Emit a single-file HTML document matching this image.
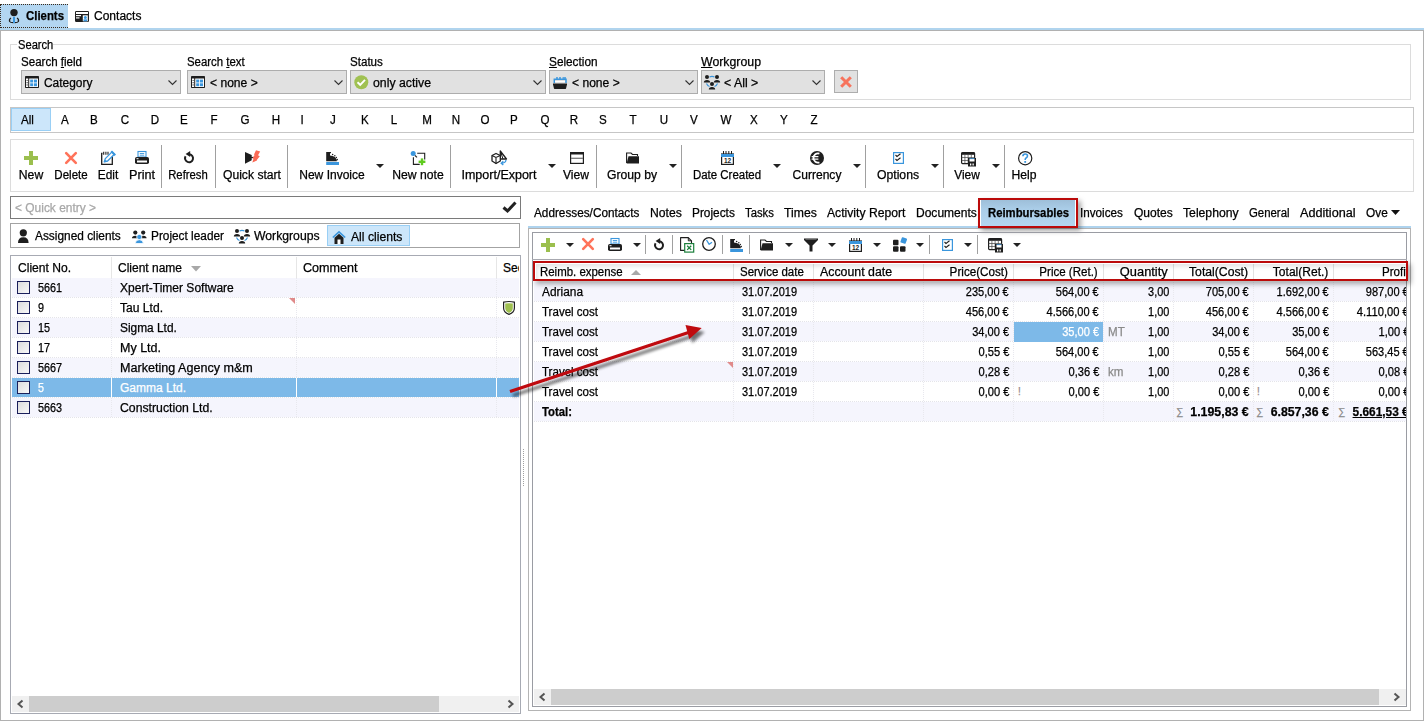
<!DOCTYPE html><html><head><meta charset="utf-8"><style>
html,body{margin:0;padding:0;background:#fff;width:1424px;height:721px;overflow:hidden;position:relative}
.a{position:absolute;box-sizing:border-box}
.t{position:absolute;font-family:"Liberation Sans",sans-serif;font-size:12px;line-height:16px;color:#000;white-space:nowrap;-webkit-text-stroke:0.25px currentColor}
svg.a{overflow:visible}
u{text-decoration:underline;text-underline-offset:1px}
</style></head><body>
<div class="a" style="left:0px;top:4px;width:68px;height:24px;background:#b3d6f1;"></div>
<div class="a" style="left:0;top:4px;width:68px;height:24px;border:1px dotted #3a2a1a;border-right:none"></div>
<div class="t" style="left:26px;top:8px;transform:scaleX(0.9500);transform-origin:0 0;"><b>Clients</b></div>
<div class="t" style="left:94px;top:8px;transform:scaleX(1.0012);transform-origin:0 0;">Contacts</div>
<div class="a" style="left:0px;top:28px;width:1424px;height:2px;background:#b0d4ee;"></div>
<div class="a" style="left:0px;top:30px;width:1424px;height:691px;border:1px solid #b1b1b1;"></div>
<div class="a" style="left:10px;top:44px;width:1401px;height:56px;border:1px solid #dcdcdc;"></div>
<div class="a" style="left:17px;top:38px;width:36px;height:12px;background:#fff"></div>
<div class="t" style="left:18px;top:37px;transform:scaleX(0.9286);transform-origin:0 0;">Search</div>
<div class="t" style="left:21px;top:54px;transform:scaleX(0.9628);transform-origin:0 0;">Search <u>f</u>ield</div>
<div class="t" style="left:187px;top:54px;transform:scaleX(0.9494);transform-origin:0 0;">Search <u>t</u>ext</div>
<div class="t" style="left:350px;top:54px;transform:scaleX(0.9650);transform-origin:0 0;">Status</div>
<div class="t" style="left:549px;top:54px;transform:scaleX(0.9826);transform-origin:0 0;"><u>S</u>election</div>
<div class="t" style="left:701px;top:54px;transform:scaleX(1.0262);transform-origin:0 0;"><u>W</u>orkgroup</div>
<div class="a" style="left:21px;top:70px;width:160px;height:24px;border:1px solid #adadad;background:#e1e1e1;"></div>
<div class="t" style="left:44px;top:75px;transform:scaleX(0.9941);transform-origin:0 0;">Category</div>
<svg class="a" style="left:168px;top:80px;" width="9" height="6" viewBox="0 0 9 6"><path d="M0.5 0.5 L4.5 4.5 L8.5 0.5" fill="none" stroke="#333" stroke-width="1.1"/></svg>
<div class="a" style="left:187px;top:70px;width:160px;height:24px;border:1px solid #adadad;background:#e1e1e1;"></div>
<div class="t" style="left:210px;top:75px;transform:scaleX(1.0069);transform-origin:0 0;">&lt; none &gt;</div>
<svg class="a" style="left:334px;top:80px;" width="9" height="6" viewBox="0 0 9 6"><path d="M0.5 0.5 L4.5 4.5 L8.5 0.5" fill="none" stroke="#333" stroke-width="1.1"/></svg>
<div class="a" style="left:350px;top:70px;width:196px;height:24px;border:1px solid #adadad;background:#e1e1e1;"></div>
<div class="t" style="left:373px;top:75px;transform:scaleX(1.0232);transform-origin:0 0;">only active</div>
<svg class="a" style="left:533px;top:80px;" width="9" height="6" viewBox="0 0 9 6"><path d="M0.5 0.5 L4.5 4.5 L8.5 0.5" fill="none" stroke="#333" stroke-width="1.1"/></svg>
<div class="a" style="left:549px;top:70px;width:149px;height:24px;border:1px solid #adadad;background:#e1e1e1;"></div>
<div class="t" style="left:572px;top:75px;transform:scaleX(1.0069);transform-origin:0 0;">&lt; none &gt;</div>
<svg class="a" style="left:685px;top:80px;" width="9" height="6" viewBox="0 0 9 6"><path d="M0.5 0.5 L4.5 4.5 L8.5 0.5" fill="none" stroke="#333" stroke-width="1.1"/></svg>
<div class="a" style="left:701px;top:70px;width:124px;height:24px;border:1px solid #adadad;background:#e1e1e1;"></div>
<div class="t" style="left:724px;top:75px;transform:scaleX(1.0277);transform-origin:0 0;">&lt; All &gt;</div>
<svg class="a" style="left:812px;top:80px;" width="9" height="6" viewBox="0 0 9 6"><path d="M0.5 0.5 L4.5 4.5 L8.5 0.5" fill="none" stroke="#333" stroke-width="1.1"/></svg>
<div class="a" style="left:834px;top:70px;width:24px;height:23px;border:1px solid #adadad;background:#e1e1e1;"></div>
<svg class="a" style="left:840px;top:76px;" width="12" height="12" viewBox="0 0 12 12"><path d="M1.2 1.2 L10.8 10.8 M10.8 1.2 L1.2 10.8" stroke="#f7735c" stroke-width="3"/></svg>
<div class="a" style="left:10px;top:107px;width:1404px;height:26px;border:1px solid #c6c6c6;"></div>
<div class="a" style="left:11px;top:108px;width:40px;height:23px;border:1px solid #99cff5;background:#cce6fa;"></div>
<div class="t" style="left:21px;top:112px;transform:scaleX(0.9650);transform-origin:0 0;">All</div>
<div class="t" style="left:-35px;width:200px;text-align:center;top:112px;transform:scaleX(0.9650);transform-origin:50% 0;">A</div>
<div class="t" style="left:-6px;width:200px;text-align:center;top:112px;transform:scaleX(0.9650);transform-origin:50% 0;">B</div>
<div class="t" style="left:25px;width:200px;text-align:center;top:112px;transform:scaleX(0.9650);transform-origin:50% 0;">C</div>
<div class="t" style="left:55px;width:200px;text-align:center;top:112px;transform:scaleX(0.9650);transform-origin:50% 0;">D</div>
<div class="t" style="left:84px;width:200px;text-align:center;top:112px;transform:scaleX(0.9650);transform-origin:50% 0;">E</div>
<div class="t" style="left:114px;width:200px;text-align:center;top:112px;transform:scaleX(0.9650);transform-origin:50% 0;">F</div>
<div class="t" style="left:145px;width:200px;text-align:center;top:112px;transform:scaleX(0.9650);transform-origin:50% 0;">G</div>
<div class="t" style="left:176px;width:200px;text-align:center;top:112px;transform:scaleX(0.9650);transform-origin:50% 0;">H</div>
<div class="t" style="left:202px;width:200px;text-align:center;top:112px;transform:scaleX(0.9650);transform-origin:50% 0;">I</div>
<div class="t" style="left:233px;width:200px;text-align:center;top:112px;transform:scaleX(0.9650);transform-origin:50% 0;">J</div>
<div class="t" style="left:265px;width:200px;text-align:center;top:112px;transform:scaleX(0.9650);transform-origin:50% 0;">K</div>
<div class="t" style="left:294px;width:200px;text-align:center;top:112px;transform:scaleX(0.9650);transform-origin:50% 0;">L</div>
<div class="t" style="left:327px;width:200px;text-align:center;top:112px;transform:scaleX(0.9650);transform-origin:50% 0;">M</div>
<div class="t" style="left:356px;width:200px;text-align:center;top:112px;transform:scaleX(0.9650);transform-origin:50% 0;">N</div>
<div class="t" style="left:385px;width:200px;text-align:center;top:112px;transform:scaleX(0.9650);transform-origin:50% 0;">O</div>
<div class="t" style="left:414px;width:200px;text-align:center;top:112px;transform:scaleX(0.9650);transform-origin:50% 0;">P</div>
<div class="t" style="left:445px;width:200px;text-align:center;top:112px;transform:scaleX(0.9650);transform-origin:50% 0;">Q</div>
<div class="t" style="left:474px;width:200px;text-align:center;top:112px;transform:scaleX(0.9650);transform-origin:50% 0;">R</div>
<div class="t" style="left:503px;width:200px;text-align:center;top:112px;transform:scaleX(0.9650);transform-origin:50% 0;">S</div>
<div class="t" style="left:533px;width:200px;text-align:center;top:112px;transform:scaleX(0.9650);transform-origin:50% 0;">T</div>
<div class="t" style="left:564px;width:200px;text-align:center;top:112px;transform:scaleX(0.9650);transform-origin:50% 0;">U</div>
<div class="t" style="left:594px;width:200px;text-align:center;top:112px;transform:scaleX(0.9650);transform-origin:50% 0;">V</div>
<div class="t" style="left:626px;width:200px;text-align:center;top:112px;transform:scaleX(0.9650);transform-origin:50% 0;">W</div>
<div class="t" style="left:654px;width:200px;text-align:center;top:112px;transform:scaleX(0.9650);transform-origin:50% 0;">X</div>
<div class="t" style="left:684px;width:200px;text-align:center;top:112px;transform:scaleX(0.9650);transform-origin:50% 0;">Y</div>
<div class="t" style="left:714px;width:200px;text-align:center;top:112px;transform:scaleX(0.9650);transform-origin:50% 0;">Z</div>
<div class="a" style="left:10px;top:139px;width:1404px;height:53px;border:1px solid #dcdcdc;"></div>
<div class="a" style="left:161px;top:145px;width:1px;height:43px;background:#a0a0a0;"></div>
<div class="a" style="left:215px;top:145px;width:1px;height:43px;background:#a0a0a0;"></div>
<div class="a" style="left:287px;top:145px;width:1px;height:43px;background:#a0a0a0;"></div>
<div class="a" style="left:450px;top:145px;width:1px;height:43px;background:#a0a0a0;"></div>
<div class="a" style="left:596px;top:145px;width:1px;height:43px;background:#a0a0a0;"></div>
<div class="a" style="left:681px;top:145px;width:1px;height:43px;background:#a0a0a0;"></div>
<div class="a" style="left:865px;top:145px;width:1px;height:43px;background:#a0a0a0;"></div>
<div class="a" style="left:943px;top:145px;width:1px;height:43px;background:#a0a0a0;"></div>
<div class="a" style="left:1004px;top:145px;width:1px;height:43px;background:#a0a0a0;"></div>
<div class="t" style="left:-69px;width:200px;text-align:center;top:167px;transform:scaleX(1.0160);transform-origin:50% 0;">New</div>
<div class="t" style="left:-29px;width:200px;text-align:center;top:167px;transform:scaleX(0.9600);transform-origin:50% 0;">Delete</div>
<div class="t" style="left:8px;width:200px;text-align:center;top:167px;transform:scaleX(0.9917);transform-origin:50% 0;">Edit</div>
<div class="t" style="left:42px;width:200px;text-align:center;top:167px;transform:scaleX(1.0538);transform-origin:50% 0;">Print</div>
<div class="t" style="left:88px;width:200px;text-align:center;top:167px;transform:scaleX(0.9425);transform-origin:50% 0;">Refresh</div>
<div class="t" style="left:152px;width:200px;text-align:center;top:167px;transform:scaleX(1.0117);transform-origin:50% 0;">Quick start</div>
<div class="t" style="left:232px;width:200px;text-align:center;top:167px;transform:scaleX(1.0022);transform-origin:50% 0;">New Invoice</div>
<div class="t" style="left:318px;width:200px;text-align:center;top:167px;transform:scaleX(1.0141);transform-origin:50% 0;">New note</div>
<div class="t" style="left:399px;width:200px;text-align:center;top:167px;transform:scaleX(1.0417);transform-origin:50% 0;">Import/Export</div>
<div class="t" style="left:476px;width:200px;text-align:center;top:167px;transform:scaleX(1.0079);transform-origin:50% 0;">View</div>
<div class="t" style="left:532px;width:200px;text-align:center;top:167px;transform:scaleX(1.0133);transform-origin:50% 0;">Group by</div>
<div class="t" style="left:627px;width:200px;text-align:center;top:167px;transform:scaleX(0.9557);transform-origin:50% 0;">Date Created</div>
<div class="t" style="left:717px;width:200px;text-align:center;top:167px;transform:scaleX(1.0023);transform-origin:50% 0;">Currency</div>
<div class="t" style="left:798px;width:200px;text-align:center;top:167px;transform:scaleX(1.0183);transform-origin:50% 0;">Options</div>
<div class="t" style="left:867px;width:200px;text-align:center;top:167px;transform:scaleX(0.9924);transform-origin:50% 0;">View</div>
<div class="t" style="left:924px;width:200px;text-align:center;top:167px;transform:scaleX(1.0127);transform-origin:50% 0;">Help</div>
<svg class="a" style="left:376px;top:164px;" width="8" height="4" viewBox="0 0 8 4"><path d="M0 0 L8 0 L4 4 Z" fill="#222"/></svg>
<svg class="a" style="left:548px;top:164px;" width="8" height="4" viewBox="0 0 8 4"><path d="M0 0 L8 0 L4 4 Z" fill="#222"/></svg>
<svg class="a" style="left:669px;top:164px;" width="8" height="4" viewBox="0 0 8 4"><path d="M0 0 L8 0 L4 4 Z" fill="#222"/></svg>
<svg class="a" style="left:773px;top:164px;" width="8" height="4" viewBox="0 0 8 4"><path d="M0 0 L8 0 L4 4 Z" fill="#222"/></svg>
<svg class="a" style="left:853px;top:164px;" width="8" height="4" viewBox="0 0 8 4"><path d="M0 0 L8 0 L4 4 Z" fill="#222"/></svg>
<svg class="a" style="left:931px;top:164px;" width="8" height="4" viewBox="0 0 8 4"><path d="M0 0 L8 0 L4 4 Z" fill="#222"/></svg>
<svg class="a" style="left:992px;top:164px;" width="8" height="4" viewBox="0 0 8 4"><path d="M0 0 L8 0 L4 4 Z" fill="#222"/></svg>
<div class="a" style="left:10px;top:196px;width:511px;height:23px;border:1px solid #7a7a7a;"></div>
<div class="t" style="left:15px;top:200px;transform:scaleX(0.9956);transform-origin:0 0;color:#a8a8a8">&lt; Quick entry &gt;</div>
<svg class="a" style="left:502px;top:201px;" width="15" height="12" viewBox="0 0 15 12"><path d="M1.5 6.5 L5.5 10 L13.5 1.5" fill="none" stroke="#222" stroke-width="3"/></svg>
<div class="a" style="left:10px;top:223px;width:510px;height:25px;border:1px solid #a3a3a3;"></div>
<div class="t" style="left:35px;top:228px;transform:scaleX(0.9896);transform-origin:0 0;">Assigned clients</div>
<div class="t" style="left:151px;top:228px;transform:scaleX(0.9861);transform-origin:0 0;">Project leader</div>
<div class="t" style="left:254px;top:228px;transform:scaleX(1.0175);transform-origin:0 0;">Workgroups</div>
<div class="a" style="left:327px;top:225px;width:83px;height:21px;border:1px solid #99cff5;background:#cce6fa;"></div>
<div class="t" style="left:351px;top:229px;transform:scaleX(1.0141);transform-origin:0 0;">All clients</div>
<div class="a" style="left:10px;top:255px;width:511px;height:459px;border:1px solid #a7aab3;"></div>
<div class="a" style="left:111px;top:257px;width:1px;height:21px;background:#e6e6e6;"></div>
<div class="a" style="left:296px;top:257px;width:1px;height:21px;background:#e6e6e6;"></div>
<div class="a" style="left:496px;top:257px;width:1px;height:21px;background:#e6e6e6;"></div>
<div class="t" style="left:18px;top:260px;transform:scaleX(1.0059);transform-origin:0 0;">Client No.</div>
<div class="t" style="left:118px;top:260px;transform:scaleX(0.9995);transform-origin:0 0;">Client name</div>
<svg class="a" style="left:191px;top:266px;" width="10" height="6" viewBox="0 0 10 6"><path d="M0 0 L10 0 L5 5.5 Z" fill="#a8a8a8"/></svg>
<div class="t" style="left:303px;top:260px;transform:scaleX(1.0478);transform-origin:0 0;">Comment</div>
<div class="a" style="left:497px;top:256px;width:22px;height:21px;overflow:hidden"><div class="t" style="left:6px;top:4px">Sec</div></div>
<div class="a" style="left:12px;top:278px;width:507px;height:19px;background:#f5f5fd;"></div>
<div class="a" style="left:12px;top:297px;width:507px;height:1px;background-image:linear-gradient(90deg,#e4e4ea 50%,transparent 50%);background-size:2px 1px"></div>
<div class="a" style="left:111px;top:278px;width:1px;height:19px;background-image:linear-gradient(180deg,#e8e8ee 50%,transparent 50%);background-size:1px 2px"></div>
<div class="a" style="left:296px;top:278px;width:1px;height:19px;background-image:linear-gradient(180deg,#e8e8ee 50%,transparent 50%);background-size:1px 2px"></div>
<div class="a" style="left:496px;top:278px;width:1px;height:19px;background-image:linear-gradient(180deg,#e8e8ee 50%,transparent 50%);background-size:1px 2px"></div>
<div class="a" style="left:17px;top:281px;width:13px;height:13px;border:1px solid #1a1f5a;background:linear-gradient(135deg,#dcdcdc,#f8f8f8)"></div>
<div class="t" style="left:38px;top:280px;transform:scaleX(0.9000);transform-origin:0 0;color:#000">5661</div>
<div class="t" style="left:120px;top:280px;transform:scaleX(1.0020);transform-origin:0 0;color:#000">Xpert-Timer Software</div>
<div class="a" style="left:12px;top:298px;width:507px;height:19px;background:#ffffff;"></div>
<div class="a" style="left:12px;top:317px;width:507px;height:1px;background-image:linear-gradient(90deg,#e4e4ea 50%,transparent 50%);background-size:2px 1px"></div>
<div class="a" style="left:111px;top:298px;width:1px;height:19px;background-image:linear-gradient(180deg,#e8e8ee 50%,transparent 50%);background-size:1px 2px"></div>
<div class="a" style="left:296px;top:298px;width:1px;height:19px;background-image:linear-gradient(180deg,#e8e8ee 50%,transparent 50%);background-size:1px 2px"></div>
<div class="a" style="left:496px;top:298px;width:1px;height:19px;background-image:linear-gradient(180deg,#e8e8ee 50%,transparent 50%);background-size:1px 2px"></div>
<div class="a" style="left:17px;top:301px;width:13px;height:13px;border:1px solid #1a1f5a;background:linear-gradient(135deg,#dcdcdc,#f8f8f8)"></div>
<div class="t" style="left:38px;top:300px;transform:scaleX(0.9000);transform-origin:0 0;color:#000">9</div>
<div class="t" style="left:120px;top:300px;transform:scaleX(1.0077);transform-origin:0 0;color:#000">Tau Ltd.</div>
<div class="a" style="left:12px;top:318px;width:507px;height:19px;background:#f5f5fd;"></div>
<div class="a" style="left:12px;top:337px;width:507px;height:1px;background-image:linear-gradient(90deg,#e4e4ea 50%,transparent 50%);background-size:2px 1px"></div>
<div class="a" style="left:111px;top:318px;width:1px;height:19px;background-image:linear-gradient(180deg,#e8e8ee 50%,transparent 50%);background-size:1px 2px"></div>
<div class="a" style="left:296px;top:318px;width:1px;height:19px;background-image:linear-gradient(180deg,#e8e8ee 50%,transparent 50%);background-size:1px 2px"></div>
<div class="a" style="left:496px;top:318px;width:1px;height:19px;background-image:linear-gradient(180deg,#e8e8ee 50%,transparent 50%);background-size:1px 2px"></div>
<div class="a" style="left:17px;top:321px;width:13px;height:13px;border:1px solid #1a1f5a;background:linear-gradient(135deg,#dcdcdc,#f8f8f8)"></div>
<div class="t" style="left:38px;top:320px;transform:scaleX(0.9000);transform-origin:0 0;color:#000">15</div>
<div class="t" style="left:120px;top:320px;transform:scaleX(0.9905);transform-origin:0 0;color:#000">Sigma Ltd.</div>
<div class="a" style="left:12px;top:338px;width:507px;height:19px;background:#ffffff;"></div>
<div class="a" style="left:12px;top:357px;width:507px;height:1px;background-image:linear-gradient(90deg,#e4e4ea 50%,transparent 50%);background-size:2px 1px"></div>
<div class="a" style="left:111px;top:338px;width:1px;height:19px;background-image:linear-gradient(180deg,#e8e8ee 50%,transparent 50%);background-size:1px 2px"></div>
<div class="a" style="left:296px;top:338px;width:1px;height:19px;background-image:linear-gradient(180deg,#e8e8ee 50%,transparent 50%);background-size:1px 2px"></div>
<div class="a" style="left:496px;top:338px;width:1px;height:19px;background-image:linear-gradient(180deg,#e8e8ee 50%,transparent 50%);background-size:1px 2px"></div>
<div class="a" style="left:17px;top:341px;width:13px;height:13px;border:1px solid #1a1f5a;background:linear-gradient(135deg,#dcdcdc,#f8f8f8)"></div>
<div class="t" style="left:38px;top:340px;transform:scaleX(0.9000);transform-origin:0 0;color:#000">17</div>
<div class="t" style="left:120px;top:340px;transform:scaleX(1.0425);transform-origin:0 0;color:#000">My Ltd.</div>
<div class="a" style="left:12px;top:358px;width:507px;height:19px;background:#f5f5fd;"></div>
<div class="a" style="left:12px;top:377px;width:507px;height:1px;background-image:linear-gradient(90deg,#e4e4ea 50%,transparent 50%);background-size:2px 1px"></div>
<div class="a" style="left:111px;top:358px;width:1px;height:19px;background-image:linear-gradient(180deg,#e8e8ee 50%,transparent 50%);background-size:1px 2px"></div>
<div class="a" style="left:296px;top:358px;width:1px;height:19px;background-image:linear-gradient(180deg,#e8e8ee 50%,transparent 50%);background-size:1px 2px"></div>
<div class="a" style="left:496px;top:358px;width:1px;height:19px;background-image:linear-gradient(180deg,#e8e8ee 50%,transparent 50%);background-size:1px 2px"></div>
<div class="a" style="left:17px;top:361px;width:13px;height:13px;border:1px solid #1a1f5a;background:linear-gradient(135deg,#dcdcdc,#f8f8f8)"></div>
<div class="t" style="left:38px;top:360px;transform:scaleX(0.9000);transform-origin:0 0;color:#000">5667</div>
<div class="t" style="left:120px;top:360px;transform:scaleX(1.0481);transform-origin:0 0;color:#000">Marketing Agency m&amp;m</div>
<div class="a" style="left:12px;top:378px;width:507px;height:19px;background:#7db9e8;"></div>
<div class="a" style="left:12px;top:397px;width:507px;height:1px;background-image:linear-gradient(90deg,#e4e4ea 50%,transparent 50%);background-size:2px 1px"></div>
<div class="a" style="left:111px;top:378px;width:1px;height:19px;background:#ffffff;"></div>
<div class="a" style="left:296px;top:378px;width:1px;height:19px;background:#ffffff;"></div>
<div class="a" style="left:496px;top:378px;width:1px;height:19px;background:#ffffff;"></div>
<div class="a" style="left:17px;top:381px;width:13px;height:13px;border:1px solid #1a1f5a;background:linear-gradient(135deg,#dcdcdc,#f8f8f8)"></div>
<div class="t" style="left:38px;top:380px;transform:scaleX(0.9000);transform-origin:0 0;color:#ffffff">5</div>
<div class="t" style="left:120px;top:380px;transform:scaleX(1.0000);transform-origin:0 0;color:#ffffff">Gamma Ltd.</div>
<div class="a" style="left:12px;top:398px;width:507px;height:19px;background:#f5f5fd;"></div>
<div class="a" style="left:12px;top:417px;width:507px;height:1px;background-image:linear-gradient(90deg,#e4e4ea 50%,transparent 50%);background-size:2px 1px"></div>
<div class="a" style="left:111px;top:398px;width:1px;height:19px;background-image:linear-gradient(180deg,#e8e8ee 50%,transparent 50%);background-size:1px 2px"></div>
<div class="a" style="left:296px;top:398px;width:1px;height:19px;background-image:linear-gradient(180deg,#e8e8ee 50%,transparent 50%);background-size:1px 2px"></div>
<div class="a" style="left:496px;top:398px;width:1px;height:19px;background-image:linear-gradient(180deg,#e8e8ee 50%,transparent 50%);background-size:1px 2px"></div>
<div class="a" style="left:17px;top:401px;width:13px;height:13px;border:1px solid #1a1f5a;background:linear-gradient(135deg,#dcdcdc,#f8f8f8)"></div>
<div class="t" style="left:38px;top:400px;transform:scaleX(0.9000);transform-origin:0 0;color:#000">5663</div>
<div class="t" style="left:120px;top:400px;transform:scaleX(1.0211);transform-origin:0 0;color:#000">Construction Ltd.</div>
<svg class="a" style="left:289px;top:298px;" width="6" height="6" viewBox="0 0 6 6"><path d="M0 0 L6 0 L6 6 Z" fill="#e08a8a"/></svg>
<svg class="a" style="left:503px;top:301px;" width="12" height="14" viewBox="0 0 12 14"><path d="M0.6 1.2 Q6 -0.2 11.4 1.2 V7 Q11.4 11.5 6 13.4 Q0.6 11.5 0.6 7 Z" fill="#fff" stroke="#222" stroke-width="1.2"/><path d="M2.2 2.6 Q6 1.7 9.8 2.6 V7 Q9.8 10.4 6 11.9 Q2.2 10.4 2.2 7 Z" fill="#9fc050"/></svg>
<div class="a" style="left:12px;top:696px;width:507px;height:16px;background:#f0f0f0;"></div>
<div class="a" style="left:29px;top:696px;width:410px;height:16px;background:#cdcdcd;"></div>
<svg class="a" style="left:17px;top:700px;" width="7" height="8" viewBox="0 0 7 8"><path d="M5.5 0.5 L1.5 4 L5.5 7.5" fill="none" stroke="#555" stroke-width="2"/></svg>
<svg class="a" style="left:507px;top:700px;" width="7" height="8" viewBox="0 0 7 8"><path d="M1.5 0.5 L5.5 4 L1.5 7.5" fill="none" stroke="#555" stroke-width="2"/></svg>
<div class="a" style="left:523px;top:449px;width:1px;height:38px;background-image:linear-gradient(180deg,#a0a0a0 50%,transparent 50%);background-size:1px 2px"></div>
<div class="t" style="left:534px;top:205px;transform:scaleX(0.9808);transform-origin:0 0;">Addresses/Contacts</div>
<div class="t" style="left:650px;top:205px;transform:scaleX(1.0146);transform-origin:0 0;">Notes</div>
<div class="t" style="left:692px;top:205px;transform:scaleX(0.9875);transform-origin:0 0;">Projects</div>
<div class="t" style="left:745px;top:205px;transform:scaleX(0.9390);transform-origin:0 0;">Tasks</div>
<div class="t" style="left:784px;top:205px;transform:scaleX(1.0175);transform-origin:0 0;">Times</div>
<div class="t" style="left:827px;top:205px;transform:scaleX(1.0137);transform-origin:0 0;">Activity Report</div>
<div class="t" style="left:916px;top:205px;transform:scaleX(1.0019);transform-origin:0 0;">Documents</div>
<div class="t" style="left:1080px;top:205px;transform:scaleX(0.9724);transform-origin:0 0;">Invoices</div>
<div class="t" style="left:1134px;top:205px;transform:scaleX(1.0033);transform-origin:0 0;">Quotes</div>
<div class="t" style="left:1183px;top:205px;transform:scaleX(1.0164);transform-origin:0 0;">Telephony</div>
<div class="t" style="left:1249px;top:205px;transform:scaleX(0.9488);transform-origin:0 0;">General</div>
<div class="t" style="left:1300px;top:205px;transform:scaleX(1.0550);transform-origin:0 0;">Additional</div>
<div class="t" style="left:1366px;top:205px;transform:scaleX(0.9864);transform-origin:0 0;">Ove</div>
<svg class="a" style="left:1391px;top:210px;" width="9" height="5" viewBox="0 0 9 5"><path d="M0 0 L9 0 L4.5 5 Z" fill="#111"/></svg>
<div class="a" style="left:528px;top:228px;width:883px;height:483px;border:1px solid #b4b4b4;"></div>
<div class="a" style="left:528px;top:226px;width:883px;height:2px;background:#aed3ee;"></div>
<div class="a" style="left:978px;top:198px;width:100px;height:30px;border:2px solid #bb0a0a;background:linear-gradient(180deg,#9ebfd9 0%,#aacde8 35%,#b3d6f0 100%);box-shadow:3px 3px 5px rgba(0,0,0,0.35), inset 1px 0 0 #fff, inset -1px 0 0 #fff"></div>
<div class="t" style="left:988px;top:205px;transform:scaleX(0.9417);transform-origin:0 0;"><b>Reimbursables</b></div>
<div class="a" style="left:532px;top:232px;width:875px;height:475px;border:1px solid #9a9ca3;"></div>
<div class="a" style="left:645px;top:235px;width:1px;height:19px;background:#a0a0a0;"></div>
<div class="a" style="left:672px;top:235px;width:1px;height:19px;background:#a0a0a0;"></div>
<div class="a" style="left:722px;top:235px;width:1px;height:19px;background:#a0a0a0;"></div>
<div class="a" style="left:749px;top:235px;width:1px;height:19px;background:#a0a0a0;"></div>
<div class="a" style="left:929px;top:235px;width:1px;height:19px;background:#a0a0a0;"></div>
<div class="a" style="left:977px;top:235px;width:1px;height:19px;background:#a0a0a0;"></div>
<svg class="a" style="left:566px;top:243px;" width="8" height="4" viewBox="0 0 8 4"><path d="M0 0 L8 0 L4 4 Z" fill="#222"/></svg>
<svg class="a" style="left:633px;top:243px;" width="8" height="4" viewBox="0 0 8 4"><path d="M0 0 L8 0 L4 4 Z" fill="#222"/></svg>
<svg class="a" style="left:785px;top:243px;" width="8" height="4" viewBox="0 0 8 4"><path d="M0 0 L8 0 L4 4 Z" fill="#222"/></svg>
<svg class="a" style="left:828px;top:243px;" width="8" height="4" viewBox="0 0 8 4"><path d="M0 0 L8 0 L4 4 Z" fill="#222"/></svg>
<svg class="a" style="left:873px;top:243px;" width="8" height="4" viewBox="0 0 8 4"><path d="M0 0 L8 0 L4 4 Z" fill="#222"/></svg>
<svg class="a" style="left:916px;top:243px;" width="8" height="4" viewBox="0 0 8 4"><path d="M0 0 L8 0 L4 4 Z" fill="#222"/></svg>
<svg class="a" style="left:964px;top:243px;" width="8" height="4" viewBox="0 0 8 4"><path d="M0 0 L8 0 L4 4 Z" fill="#222"/></svg>
<svg class="a" style="left:1013px;top:243px;" width="8" height="4" viewBox="0 0 8 4"><path d="M0 0 L8 0 L4 4 Z" fill="#222"/></svg>
<div class="a" style="left:532px;top:259px;width:875px;height:1px;background:#a9abb2;"></div>
<div class="a" style="left:733px;top:261px;width:1px;height:20px;background:#e2e2e2;"></div>
<div class="a" style="left:813px;top:261px;width:1px;height:20px;background:#e2e2e2;"></div>
<div class="a" style="left:923px;top:261px;width:1px;height:20px;background:#e2e2e2;"></div>
<div class="a" style="left:1013px;top:261px;width:1px;height:20px;background:#e2e2e2;"></div>
<div class="a" style="left:1103px;top:261px;width:1px;height:20px;background:#e2e2e2;"></div>
<div class="a" style="left:1173px;top:261px;width:1px;height:20px;background:#e2e2e2;"></div>
<div class="a" style="left:1253px;top:261px;width:1px;height:20px;background:#e2e2e2;"></div>
<div class="a" style="left:1333px;top:261px;width:1px;height:20px;background:#e2e2e2;"></div>
<div class="t" style="left:540px;top:264px;transform:scaleX(0.9527);transform-origin:0 0;">Reimb. expense</div>
<svg class="a" style="left:631px;top:270px;" width="10" height="5" viewBox="0 0 10 5"><path d="M0 5 L10 5 L5 0 Z" fill="#a8a8a8"/></svg>
<div class="t" style="left:740px;top:264px;transform:scaleX(0.9567);transform-origin:0 0;">Service date</div>
<div class="t" style="left:820px;top:264px;transform:scaleX(1.0283);transform-origin:0 0;">Account date</div>
<div class="t" style="right:416px;top:264px;transform:scaleX(0.9731);transform-origin:100% 0;">Price(Cost)</div>
<div class="t" style="right:326px;top:264px;transform:scaleX(0.9609);transform-origin:100% 0;">Price (Ret.)</div>
<div class="t" style="right:256px;top:264px;transform:scaleX(1.0700);transform-origin:100% 0;">Quantity</div>
<div class="t" style="right:176px;top:264px;transform:scaleX(1.0170);transform-origin:100% 0;">Total(Cost)</div>
<div class="t" style="right:96px;top:264px;transform:scaleX(1.0028);transform-origin:100% 0;">Total(Ret.)</div>
<div class="a" style="left:1334px;top:262px;width:72px;height:19px;overflow:hidden"><div class="t" style="left:auto;right:-3px;top:2px;transform:scaleX(0.9650);transform-origin:100% 0;">Profit</div></div>
<div class="a" style="left:534px;top:282px;width:872px;height:19px;background:#f5f5fd;"></div>
<div class="a" style="left:534px;top:301px;width:872px;height:1px;background-image:linear-gradient(90deg,#e4e4ea 50%,transparent 50%);background-size:2px 1px"></div>
<div class="a" style="left:733px;top:282px;width:1px;height:19px;background-image:linear-gradient(180deg,#e8e8ee 50%,transparent 50%);background-size:1px 2px"></div>
<div class="a" style="left:813px;top:282px;width:1px;height:19px;background-image:linear-gradient(180deg,#e8e8ee 50%,transparent 50%);background-size:1px 2px"></div>
<div class="a" style="left:923px;top:282px;width:1px;height:19px;background-image:linear-gradient(180deg,#e8e8ee 50%,transparent 50%);background-size:1px 2px"></div>
<div class="a" style="left:1013px;top:282px;width:1px;height:19px;background-image:linear-gradient(180deg,#e8e8ee 50%,transparent 50%);background-size:1px 2px"></div>
<div class="a" style="left:1103px;top:282px;width:1px;height:19px;background-image:linear-gradient(180deg,#e8e8ee 50%,transparent 50%);background-size:1px 2px"></div>
<div class="a" style="left:1173px;top:282px;width:1px;height:19px;background-image:linear-gradient(180deg,#e8e8ee 50%,transparent 50%);background-size:1px 2px"></div>
<div class="a" style="left:1253px;top:282px;width:1px;height:19px;background-image:linear-gradient(180deg,#e8e8ee 50%,transparent 50%);background-size:1px 2px"></div>
<div class="a" style="left:1333px;top:282px;width:1px;height:19px;background-image:linear-gradient(180deg,#e8e8ee 50%,transparent 50%);background-size:1px 2px"></div>
<div class="t" style="left:542px;top:284px;transform:scaleX(0.9913);transform-origin:0 0;">Adriana</div>
<div class="t" style="left:742px;top:284px;transform:scaleX(0.9162);transform-origin:0 0;">31.07.2019</div>
<div class="t" style="right:415px;top:284px;transform:scaleX(0.9186);transform-origin:100% 0;">235,00 €</div>
<div class="t" style="right:325px;top:284px;transform:scaleX(0.9186);transform-origin:100% 0;">564,00 €</div>
<div class="t" style="right:255px;top:284px;transform:scaleX(0.9093);transform-origin:100% 0;">3,00</div>
<div class="t" style="right:175px;top:284px;transform:scaleX(0.9186);transform-origin:100% 0;">705,00 €</div>
<div class="t" style="right:95px;top:284px;transform:scaleX(0.9191);transform-origin:100% 0;">1.692,00 €</div>
<div class="a" style="left:1334px;top:282px;width:72px;height:19px;overflow:hidden"><div class="t" style="left:auto;right:-3px;top:2px;transform:scaleX(0.9186);transform-origin:100% 0;">987,00 €</div></div>
<div class="a" style="left:534px;top:302px;width:872px;height:19px;background:#ffffff;"></div>
<div class="a" style="left:534px;top:321px;width:872px;height:1px;background-image:linear-gradient(90deg,#e4e4ea 50%,transparent 50%);background-size:2px 1px"></div>
<div class="a" style="left:733px;top:302px;width:1px;height:19px;background-image:linear-gradient(180deg,#e8e8ee 50%,transparent 50%);background-size:1px 2px"></div>
<div class="a" style="left:813px;top:302px;width:1px;height:19px;background-image:linear-gradient(180deg,#e8e8ee 50%,transparent 50%);background-size:1px 2px"></div>
<div class="a" style="left:923px;top:302px;width:1px;height:19px;background-image:linear-gradient(180deg,#e8e8ee 50%,transparent 50%);background-size:1px 2px"></div>
<div class="a" style="left:1013px;top:302px;width:1px;height:19px;background-image:linear-gradient(180deg,#e8e8ee 50%,transparent 50%);background-size:1px 2px"></div>
<div class="a" style="left:1103px;top:302px;width:1px;height:19px;background-image:linear-gradient(180deg,#e8e8ee 50%,transparent 50%);background-size:1px 2px"></div>
<div class="a" style="left:1173px;top:302px;width:1px;height:19px;background-image:linear-gradient(180deg,#e8e8ee 50%,transparent 50%);background-size:1px 2px"></div>
<div class="a" style="left:1253px;top:302px;width:1px;height:19px;background-image:linear-gradient(180deg,#e8e8ee 50%,transparent 50%);background-size:1px 2px"></div>
<div class="a" style="left:1333px;top:302px;width:1px;height:19px;background-image:linear-gradient(180deg,#e8e8ee 50%,transparent 50%);background-size:1px 2px"></div>
<div class="t" style="left:542px;top:304px;transform:scaleX(0.9616);transform-origin:0 0;">Travel cost</div>
<div class="t" style="left:742px;top:304px;transform:scaleX(0.9162);transform-origin:0 0;">31.07.2019</div>
<div class="t" style="right:415px;top:304px;transform:scaleX(0.9186);transform-origin:100% 0;">456,00 €</div>
<div class="t" style="right:325px;top:304px;transform:scaleX(0.9191);transform-origin:100% 0;">4.566,00 €</div>
<div class="t" style="right:255px;top:304px;transform:scaleX(0.9093);transform-origin:100% 0;">1,00</div>
<div class="t" style="right:175px;top:304px;transform:scaleX(0.9186);transform-origin:100% 0;">456,00 €</div>
<div class="t" style="right:95px;top:304px;transform:scaleX(0.9191);transform-origin:100% 0;">4.566,00 €</div>
<div class="a" style="left:1334px;top:302px;width:72px;height:19px;overflow:hidden"><div class="t" style="left:auto;right:-3px;top:2px;transform:scaleX(0.9338);transform-origin:100% 0;">4.110,00 €</div></div>
<div class="a" style="left:534px;top:322px;width:872px;height:19px;background:#f5f5fd;"></div>
<div class="a" style="left:534px;top:341px;width:872px;height:1px;background-image:linear-gradient(90deg,#e4e4ea 50%,transparent 50%);background-size:2px 1px"></div>
<div class="a" style="left:733px;top:322px;width:1px;height:19px;background-image:linear-gradient(180deg,#e8e8ee 50%,transparent 50%);background-size:1px 2px"></div>
<div class="a" style="left:813px;top:322px;width:1px;height:19px;background-image:linear-gradient(180deg,#e8e8ee 50%,transparent 50%);background-size:1px 2px"></div>
<div class="a" style="left:923px;top:322px;width:1px;height:19px;background-image:linear-gradient(180deg,#e8e8ee 50%,transparent 50%);background-size:1px 2px"></div>
<div class="a" style="left:1013px;top:322px;width:1px;height:19px;background-image:linear-gradient(180deg,#e8e8ee 50%,transparent 50%);background-size:1px 2px"></div>
<div class="a" style="left:1103px;top:322px;width:1px;height:19px;background-image:linear-gradient(180deg,#e8e8ee 50%,transparent 50%);background-size:1px 2px"></div>
<div class="a" style="left:1173px;top:322px;width:1px;height:19px;background-image:linear-gradient(180deg,#e8e8ee 50%,transparent 50%);background-size:1px 2px"></div>
<div class="a" style="left:1253px;top:322px;width:1px;height:19px;background-image:linear-gradient(180deg,#e8e8ee 50%,transparent 50%);background-size:1px 2px"></div>
<div class="a" style="left:1333px;top:322px;width:1px;height:19px;background-image:linear-gradient(180deg,#e8e8ee 50%,transparent 50%);background-size:1px 2px"></div>
<div class="t" style="left:542px;top:324px;transform:scaleX(0.9616);transform-origin:0 0;">Travel cost</div>
<div class="t" style="left:742px;top:324px;transform:scaleX(0.9162);transform-origin:0 0;">31.07.2019</div>
<div class="t" style="right:415px;top:324px;transform:scaleX(0.9216);transform-origin:100% 0;">34,00 €</div>
<div class="a" style="left:1014px;top:322px;width:89px;height:20px;background:#7db9e8;"></div>
<div class="t" style="right:325px;top:324px;transform:scaleX(0.9216);transform-origin:100% 0;;color:#fff">35,00 €</div>
<div class="t" style="left:1108px;top:324px;transform:scaleX(0.9650);transform-origin:0 0;color:#8a8a8a">MT</div>
<div class="t" style="right:255px;top:324px;transform:scaleX(0.9093);transform-origin:100% 0;">1,00</div>
<div class="t" style="right:175px;top:324px;transform:scaleX(0.9216);transform-origin:100% 0;">34,00 €</div>
<div class="t" style="right:95px;top:324px;transform:scaleX(0.9216);transform-origin:100% 0;">35,00 €</div>
<div class="a" style="left:1334px;top:322px;width:72px;height:19px;overflow:hidden"><div class="t" style="left:auto;right:-3px;top:2px;transform:scaleX(0.9260);transform-origin:100% 0;">1,00 €</div></div>
<div class="a" style="left:534px;top:342px;width:872px;height:19px;background:#ffffff;"></div>
<div class="a" style="left:534px;top:361px;width:872px;height:1px;background-image:linear-gradient(90deg,#e4e4ea 50%,transparent 50%);background-size:2px 1px"></div>
<div class="a" style="left:733px;top:342px;width:1px;height:19px;background-image:linear-gradient(180deg,#e8e8ee 50%,transparent 50%);background-size:1px 2px"></div>
<div class="a" style="left:813px;top:342px;width:1px;height:19px;background-image:linear-gradient(180deg,#e8e8ee 50%,transparent 50%);background-size:1px 2px"></div>
<div class="a" style="left:923px;top:342px;width:1px;height:19px;background-image:linear-gradient(180deg,#e8e8ee 50%,transparent 50%);background-size:1px 2px"></div>
<div class="a" style="left:1013px;top:342px;width:1px;height:19px;background-image:linear-gradient(180deg,#e8e8ee 50%,transparent 50%);background-size:1px 2px"></div>
<div class="a" style="left:1103px;top:342px;width:1px;height:19px;background-image:linear-gradient(180deg,#e8e8ee 50%,transparent 50%);background-size:1px 2px"></div>
<div class="a" style="left:1173px;top:342px;width:1px;height:19px;background-image:linear-gradient(180deg,#e8e8ee 50%,transparent 50%);background-size:1px 2px"></div>
<div class="a" style="left:1253px;top:342px;width:1px;height:19px;background-image:linear-gradient(180deg,#e8e8ee 50%,transparent 50%);background-size:1px 2px"></div>
<div class="a" style="left:1333px;top:342px;width:1px;height:19px;background-image:linear-gradient(180deg,#e8e8ee 50%,transparent 50%);background-size:1px 2px"></div>
<div class="t" style="left:542px;top:344px;transform:scaleX(0.9616);transform-origin:0 0;">Travel cost</div>
<div class="t" style="left:742px;top:344px;transform:scaleX(0.9162);transform-origin:0 0;">31.07.2019</div>
<div class="t" style="right:415px;top:344px;transform:scaleX(0.9260);transform-origin:100% 0;">0,55 €</div>
<div class="t" style="right:325px;top:344px;transform:scaleX(0.9186);transform-origin:100% 0;">564,00 €</div>
<div class="t" style="right:255px;top:344px;transform:scaleX(0.9093);transform-origin:100% 0;">1,00</div>
<div class="t" style="right:175px;top:344px;transform:scaleX(0.9260);transform-origin:100% 0;">0,55 €</div>
<div class="t" style="right:95px;top:344px;transform:scaleX(0.9186);transform-origin:100% 0;">564,00 €</div>
<div class="a" style="left:1334px;top:342px;width:72px;height:19px;overflow:hidden"><div class="t" style="left:auto;right:-3px;top:2px;transform:scaleX(0.9186);transform-origin:100% 0;">563,45 €</div></div>
<div class="a" style="left:534px;top:362px;width:872px;height:19px;background:#f5f5fd;"></div>
<div class="a" style="left:534px;top:381px;width:872px;height:1px;background-image:linear-gradient(90deg,#e4e4ea 50%,transparent 50%);background-size:2px 1px"></div>
<div class="a" style="left:733px;top:362px;width:1px;height:19px;background-image:linear-gradient(180deg,#e8e8ee 50%,transparent 50%);background-size:1px 2px"></div>
<div class="a" style="left:813px;top:362px;width:1px;height:19px;background-image:linear-gradient(180deg,#e8e8ee 50%,transparent 50%);background-size:1px 2px"></div>
<div class="a" style="left:923px;top:362px;width:1px;height:19px;background-image:linear-gradient(180deg,#e8e8ee 50%,transparent 50%);background-size:1px 2px"></div>
<div class="a" style="left:1013px;top:362px;width:1px;height:19px;background-image:linear-gradient(180deg,#e8e8ee 50%,transparent 50%);background-size:1px 2px"></div>
<div class="a" style="left:1103px;top:362px;width:1px;height:19px;background-image:linear-gradient(180deg,#e8e8ee 50%,transparent 50%);background-size:1px 2px"></div>
<div class="a" style="left:1173px;top:362px;width:1px;height:19px;background-image:linear-gradient(180deg,#e8e8ee 50%,transparent 50%);background-size:1px 2px"></div>
<div class="a" style="left:1253px;top:362px;width:1px;height:19px;background-image:linear-gradient(180deg,#e8e8ee 50%,transparent 50%);background-size:1px 2px"></div>
<div class="a" style="left:1333px;top:362px;width:1px;height:19px;background-image:linear-gradient(180deg,#e8e8ee 50%,transparent 50%);background-size:1px 2px"></div>
<div class="t" style="left:542px;top:364px;transform:scaleX(0.9616);transform-origin:0 0;">Travel cost</div>
<div class="t" style="left:742px;top:364px;transform:scaleX(0.9162);transform-origin:0 0;">31.07.2019</div>
<div class="t" style="right:415px;top:364px;transform:scaleX(0.9260);transform-origin:100% 0;">0,28 €</div>
<div class="t" style="right:325px;top:364px;transform:scaleX(0.9260);transform-origin:100% 0;">0,36 €</div>
<div class="t" style="left:1108px;top:364px;transform:scaleX(0.9650);transform-origin:0 0;color:#8a8a8a">km</div>
<div class="t" style="right:255px;top:364px;transform:scaleX(0.9093);transform-origin:100% 0;">1,00</div>
<div class="t" style="right:175px;top:364px;transform:scaleX(0.9260);transform-origin:100% 0;">0,28 €</div>
<div class="t" style="right:95px;top:364px;transform:scaleX(0.9260);transform-origin:100% 0;">0,36 €</div>
<div class="a" style="left:1334px;top:362px;width:72px;height:19px;overflow:hidden"><div class="t" style="left:auto;right:-3px;top:2px;transform:scaleX(0.9260);transform-origin:100% 0;">0,08 €</div></div>
<div class="a" style="left:534px;top:382px;width:872px;height:19px;background:#ffffff;"></div>
<div class="a" style="left:534px;top:401px;width:872px;height:1px;background-image:linear-gradient(90deg,#e4e4ea 50%,transparent 50%);background-size:2px 1px"></div>
<div class="a" style="left:733px;top:382px;width:1px;height:19px;background-image:linear-gradient(180deg,#e8e8ee 50%,transparent 50%);background-size:1px 2px"></div>
<div class="a" style="left:813px;top:382px;width:1px;height:19px;background-image:linear-gradient(180deg,#e8e8ee 50%,transparent 50%);background-size:1px 2px"></div>
<div class="a" style="left:923px;top:382px;width:1px;height:19px;background-image:linear-gradient(180deg,#e8e8ee 50%,transparent 50%);background-size:1px 2px"></div>
<div class="a" style="left:1013px;top:382px;width:1px;height:19px;background-image:linear-gradient(180deg,#e8e8ee 50%,transparent 50%);background-size:1px 2px"></div>
<div class="a" style="left:1103px;top:382px;width:1px;height:19px;background-image:linear-gradient(180deg,#e8e8ee 50%,transparent 50%);background-size:1px 2px"></div>
<div class="a" style="left:1173px;top:382px;width:1px;height:19px;background-image:linear-gradient(180deg,#e8e8ee 50%,transparent 50%);background-size:1px 2px"></div>
<div class="a" style="left:1253px;top:382px;width:1px;height:19px;background-image:linear-gradient(180deg,#e8e8ee 50%,transparent 50%);background-size:1px 2px"></div>
<div class="a" style="left:1333px;top:382px;width:1px;height:19px;background-image:linear-gradient(180deg,#e8e8ee 50%,transparent 50%);background-size:1px 2px"></div>
<div class="t" style="left:542px;top:384px;transform:scaleX(0.9616);transform-origin:0 0;">Travel cost</div>
<div class="t" style="left:742px;top:384px;transform:scaleX(0.9162);transform-origin:0 0;">31.07.2019</div>
<div class="t" style="right:415px;top:384px;transform:scaleX(0.9260);transform-origin:100% 0;">0,00 €</div>
<div class="t" style="right:325px;top:384px;transform:scaleX(0.9260);transform-origin:100% 0;">0,00 €</div>
<div class="t" style="right:255px;top:384px;transform:scaleX(0.9093);transform-origin:100% 0;">1,00</div>
<div class="t" style="right:175px;top:384px;transform:scaleX(0.9260);transform-origin:100% 0;">0,00 €</div>
<div class="t" style="right:95px;top:384px;transform:scaleX(0.9260);transform-origin:100% 0;">0,00 €</div>
<div class="a" style="left:1334px;top:382px;width:72px;height:19px;overflow:hidden"><div class="t" style="left:auto;right:-3px;top:2px;transform:scaleX(0.9260);transform-origin:100% 0;">0,00 €</div></div>
<div class="a" style="left:534px;top:402px;width:872px;height:19px;background:#f5f5fd;"></div>
<div class="a" style="left:534px;top:421px;width:872px;height:1px;background-image:linear-gradient(90deg,#e4e4ea 50%,transparent 50%);background-size:2px 1px"></div>
<div class="a" style="left:733px;top:402px;width:1px;height:19px;background-image:linear-gradient(180deg,#e8e8ee 50%,transparent 50%);background-size:1px 2px"></div>
<div class="a" style="left:813px;top:402px;width:1px;height:19px;background-image:linear-gradient(180deg,#e8e8ee 50%,transparent 50%);background-size:1px 2px"></div>
<div class="a" style="left:923px;top:402px;width:1px;height:19px;background-image:linear-gradient(180deg,#e8e8ee 50%,transparent 50%);background-size:1px 2px"></div>
<div class="a" style="left:1013px;top:402px;width:1px;height:19px;background-image:linear-gradient(180deg,#e8e8ee 50%,transparent 50%);background-size:1px 2px"></div>
<div class="a" style="left:1103px;top:402px;width:1px;height:19px;background-image:linear-gradient(180deg,#e8e8ee 50%,transparent 50%);background-size:1px 2px"></div>
<div class="a" style="left:1173px;top:402px;width:1px;height:19px;background-image:linear-gradient(180deg,#e8e8ee 50%,transparent 50%);background-size:1px 2px"></div>
<div class="a" style="left:1253px;top:402px;width:1px;height:19px;background-image:linear-gradient(180deg,#e8e8ee 50%,transparent 50%);background-size:1px 2px"></div>
<div class="a" style="left:1333px;top:402px;width:1px;height:19px;background-image:linear-gradient(180deg,#e8e8ee 50%,transparent 50%);background-size:1px 2px"></div>
<div class="t" style="left:542px;top:404px;transform:scaleX(0.9444);transform-origin:0 0;"><b>Total:</b></div>
<div class="t" style="right:175px;top:404px;transform:scaleX(1.0302);transform-origin:100% 0;"><b>1.195,83 €</b></div>
<div class="t" style="right:95px;top:404px;transform:scaleX(1.0232);transform-origin:100% 0;"><b>6.857,36 €</b></div>
<div class="a" style="left:1334px;top:402px;width:72px;height:19px;overflow:hidden"><div class="t" style="left:auto;right:-3px;top:2px;transform:scaleX(0.9900);transform-origin:100% 0;"><b><u>5.661,53 €</u></b></div></div>
<div class="t" style="left:1176px;top:404px;transform:scaleX(1.0000);transform-origin:0 0;color:#888;font-size:10px">∑</div>
<div class="t" style="left:1256px;top:404px;transform:scaleX(1.0000);transform-origin:0 0;color:#888;font-size:10px">∑</div>
<div class="t" style="left:1338px;top:404px;transform:scaleX(1.0000);transform-origin:0 0;color:#888;font-size:10px">∑</div>
<div class="t" style="left:1018px;top:384px;transform:scaleX(1.0000);transform-origin:0 0;color:#9a8c8c;font-size:10px">!</div>
<div class="t" style="left:1257px;top:384px;transform:scaleX(1.0000);transform-origin:0 0;color:#9a8c8c;font-size:10px">!</div>
<svg class="a" style="left:727px;top:362px;" width="6" height="6" viewBox="0 0 6 6"><path d="M0 0 L6 0 L6 6 Z" fill="#e08a8a"/></svg>
<div class="a" style="left:533px;top:261px;width:875px;height:20px;border:2px solid #bb0a0a;box-shadow:3px 3px 5px rgba(0,0,0,0.32), inset 1px 1px 0 #fff, inset 3px 4px 4px rgba(0,0,0,0.10)"></div>
<div class="a" style="left:534px;top:689px;width:872px;height:16px;background:#f0f0f0;"></div>
<div class="a" style="left:551px;top:689px;width:828px;height:16px;background:#cdcdcd;"></div>
<svg class="a" style="left:539px;top:693px;" width="7" height="8" viewBox="0 0 7 8"><path d="M5.5 0.5 L1.5 4 L5.5 7.5" fill="none" stroke="#555" stroke-width="2"/></svg>
<svg class="a" style="left:1393px;top:693px;" width="7" height="8" viewBox="0 0 7 8"><path d="M1.5 0.5 L5.5 4 L1.5 7.5" fill="none" stroke="#555" stroke-width="2"/></svg>
<svg class="a" style="left:500px;top:315px;" width="220" height="90" viewBox="0 0 220 90"><defs><filter id="sh" x="-20%" y="-50%" width="140%" height="200%"><feGaussianBlur stdDeviation="1.6"/></filter></defs><g transform="translate(3,4)" opacity="0.55" filter="url(#sh)"><line x1="10" y1="76.5" x2="190" y2="17" stroke="#000" stroke-width="3.2"/><path d="M201.7 13 L185.5 10 L189.3 24 Z" fill="#000"/></g><line x1="10" y1="76.5" x2="190" y2="17" stroke="#bf0a0f" stroke-width="3.2"/><path d="M201.7 13 L185.5 10 L189.3 24 Z" fill="#bf0a0f"/></svg>
<svg class="a" style="left:9px;top:9px;" width="11" height="15" viewBox="0 0 11 15"><circle cx="5" cy="3.6" r="3.7" fill="#1e1e1e"/><path d="M2 9 Q0 10 0.6 12.5 Q1.5 13.8 4.5 13.7 M8 9 Q10 10 9.4 12.5 Q8.5 13.8 5.5 13.7" fill="none" stroke="#1e1e1e" stroke-width="1.3"/><rect x="4" y="8" width="2" height="6" fill="#3a96dd"/></svg>
<svg class="a" style="left:75px;top:11px;" width="14" height="11" viewBox="0 0 14 11"><rect x="0" y="0" width="14" height="11" rx="1.2" fill="#1e1e1e"/><rect x="1" y="1" width="12" height="2" fill="#fff"/><rect x="1" y="4" width="5" height="1.2" fill="#fff"/><rect x="1" y="6.3" width="3.5" height="1.2" fill="#fff"/><rect x="7.8" y="4.3" width="5" height="6" fill="#fff"/><circle cx="10.3" cy="6.6" r="1.5" fill="#3a96dd"/><rect x="8.5" y="8.3" width="3.6" height="2" fill="#3a96dd"/></svg>
<svg class="a" style="left:25px;top:76px;" width="14" height="12" viewBox="0 0 14 12"><rect x="0" y="0" width="14" height="12" rx="0.7" fill="#1e1e1e"/><rect x="1" y="2.5" width="2.2" height="8.5" fill="#fff"/><rect x="4.2" y="2.5" width="8.8" height="8.5" fill="#fff"/><circle cx="2.1" cy="4.5" r="0.6" fill="#1e1e1e"/><circle cx="2.1" cy="6.7" r="0.6" fill="#1e1e1e"/><circle cx="2.1" cy="8.9" r="0.6" fill="#1e1e1e"/><rect x="5.2" y="3.6" width="3" height="2.9" fill="#3a96dd"/><rect x="9" y="3.6" width="3" height="2.9" fill="#3a96dd"/><rect x="5.2" y="7.3" width="3" height="2.9" fill="#3a96dd"/><rect x="9" y="7.3" width="3" height="2.9" fill="#3a96dd"/></svg>
<svg class="a" style="left:191px;top:76px;" width="14" height="12" viewBox="0 0 14 12"><rect x="0" y="0" width="14" height="12" rx="0.7" fill="#1e1e1e"/><rect x="1" y="2.5" width="2.2" height="8.5" fill="#fff"/><rect x="4.2" y="2.5" width="8.8" height="8.5" fill="#fff"/><circle cx="2.1" cy="4.5" r="0.6" fill="#1e1e1e"/><circle cx="2.1" cy="6.7" r="0.6" fill="#1e1e1e"/><circle cx="2.1" cy="8.9" r="0.6" fill="#1e1e1e"/><rect x="5.2" y="3.6" width="3" height="2.9" fill="#3a96dd"/><rect x="9" y="3.6" width="3" height="2.9" fill="#3a96dd"/><rect x="5.2" y="7.3" width="3" height="2.9" fill="#3a96dd"/><rect x="9" y="7.3" width="3" height="2.9" fill="#3a96dd"/></svg>
<svg class="a" style="left:354px;top:75px;" width="15" height="15" viewBox="0 0 15 15"><circle cx="7.3" cy="7.3" r="7" fill="#a0c152"/><path d="M3.5 7.3 L6.2 9.8 L11 4.8" fill="none" stroke="#fff" stroke-width="1.9"/></svg>
<svg class="a" style="left:553px;top:77px;" width="14" height="12" viewBox="0 0 14 12"><path d="M1.3 6 V2.2 H13 V6" fill="none" stroke="#3a96dd" stroke-width="1.5"/><path d="M3 1 H5 M6 1 H8 M9.5 1 H13" stroke="#3a96dd" stroke-width="1.4"/><path d="M0 6.5 H14 V7.5 L13 11.5 Q12.8 12 12 12 H2 Q1.2 12 1 11.5 L0 7.5 Z" fill="#1e1e1e"/><rect x="2" y="4" width="10" height="1" fill="#fff"/></svg>
<svg class="a" style="left:704px;top:75px;" width="17" height="15" viewBox="0 0 17 15"><path d="M5.5 2 Q8 0.8 10.5 2 M2.5 8.5 Q3.5 11 5.5 11.5 M13.5 8.5 Q12.5 11 10.5 11.5" fill="none" stroke="#3a96dd" stroke-width="1.1"/><circle cx="3" cy="2" r="2.0" fill="#1e1e1e"/><path d="M-0.20000000000000018 7.4 Q-0.20000000000000018 4.9 3 4.9 Q6.2 4.9 6.2 7.4 Z" fill="#1e1e1e"/><circle cx="13" cy="2" r="2.0" fill="#1e1e1e"/><path d="M9.8 7.4 Q9.8 4.9 13 4.9 Q16.2 4.9 16.2 7.4 Z" fill="#1e1e1e"/><circle cx="8" cy="9" r="2.0" fill="#1e1e1e"/><path d="M4.8 14.4 Q4.8 11.9 8 11.9 Q11.2 11.9 11.2 14.4 Z" fill="#1e1e1e"/></svg>
<svg class="a" style="left:24px;top:151px;" width="14" height="14" viewBox="0 0 14 14"><rect x="5" y="0" width="4" height="14" fill="#9bbf4e"/><rect x="0" y="5" width="14" height="4" fill="#9bbf4e"/></svg>
<svg class="a" style="left:65px;top:152px;" width="12" height="12" viewBox="0 0 12 12"><path d="M1.2 1.2 L10.8 10.8 M10.8 1.2 L1.2 10.8" stroke="#ff735a" stroke-width="2.6" stroke-linecap="round"/></svg>
<svg class="a" style="left:101px;top:151px;" width="15" height="14" viewBox="0 0 15 14"><path d="M11.3 4.5 V13.3 H0.7 V2.3 H1.5" fill="none" stroke="#1e1e1e" stroke-width="1.3"/><path d="M2.7 0.8 V3.8 M4.9 0.8 V3.8 M7 0.8 V3.8" stroke="#1e1e1e" stroke-width="1.1"/><path d="M3.3 10.8 L4.3 7.6 L11 0.9 L13.4 3.3 L6.6 10 Z" fill="#fff" stroke="#3a96dd" stroke-width="1.3" stroke-linejoin="round"/><path d="M10.3 0.2 L14.3 4.2" stroke="#3a96dd" stroke-width="2"/><path d="M3.3 10.8 L4.8 9.3" stroke="#3a96dd" stroke-width="1.5"/></svg>
<svg class="a" style="left:135px;top:151px;" width="14" height="13" viewBox="0 0 14 13"><rect x="3" y="0.5" width="8" height="5.5" fill="#fff" stroke="#3a96dd" stroke-width="1.1"/><path d="M4.8 2.5 H9.2 M4.8 4.2 H9.2" stroke="#3a96dd" stroke-width="0.9"/><rect x="0" y="6" width="14" height="7" rx="1.8" fill="#1e1e1e"/><rect x="2" y="9.5" width="10" height="2" fill="#fff"/><rect x="1.5" y="7.2" width="2" height="1" fill="#fff"/></svg>
<svg class="a" style="left:183px;top:150px;" width="12" height="14" viewBox="0 0 12 14"><path d="M6.5 4.25 A4 4 0 1 1 2.54 6.25" fill="none" stroke="#1e1e1e" stroke-width="2"/><path d="M2.6 3.9 L7.2 0.9 L7.2 6.9 Z" fill="#1e1e1e"/></svg>
<svg class="a" style="left:244px;top:150px;" width="17" height="15" viewBox="0 0 17 15"><path d="M1 2 L7.7 5 L7.7 10.3 L1 13.7 Z" fill="#1e1e1e"/><path d="M7 7.5 H10" stroke="#1e1e1e" stroke-width="1.2"/><path d="M12 0.2 L16.2 1.5 L14 5.2 L15.8 6.2 L12.8 10 L13 10.6 L8.3 12.5 L9.5 8.8 L8.5 8.3 L10.6 5 L10 4.5 Z" fill="#fa6a55"/></svg>
<svg class="a" style="left:326px;top:151px;" width="14" height="14" viewBox="0 0 14 14"><path d="M0.2 1 H5 V2.2 H4 V4.6 Q9.5 5 10.8 9.2 V10.2 H0.2 Z" fill="#1e1e1e"/><circle cx="6.6" cy="3.6" r="0.75" fill="#1e1e1e"/><circle cx="8.8" cy="4.8" r="0.75" fill="#1e1e1e"/><circle cx="10.3" cy="6.5" r="0.75" fill="#1e1e1e"/><circle cx="11.2" cy="8.6" r="0.8" fill="#1e1e1e"/><rect x="0.2" y="11" width="12.8" height="3" fill="#3a96dd"/></svg>
<svg class="a" style="left:411px;top:151px;" width="16" height="15" viewBox="0 0 16 15"><path d="M6.2 2.3 H13.7 V8.5 M2.4 6.3 V13.4 H8.7" fill="none" stroke="#1e1e1e" stroke-width="1.1"/><circle cx="2.2" cy="2.5" r="2.5" fill="#3a96dd"/><path d="M4 4.5 L6 6.3" stroke="#1e1e1e" stroke-width="1.1"/><rect x="9.8" y="7.4" width="2.4" height="6.8" fill="#5fcb1e"/><rect x="7.6" y="9.6" width="6.8" height="2.4" fill="#5fcb1e"/></svg>
<svg class="a" style="left:491px;top:150px;" width="17" height="15" viewBox="0 0 17 15"><path d="M9.3 1 L15.5 9 L9.3 9 Z" fill="#fff" stroke="#1e1e1e" stroke-width="1.3" stroke-linejoin="round"/><path d="M9.3 1 L12 9" stroke="#1e1e1e" stroke-width="1"/><path d="M1 5.5 L5 3.5 L9.3 5.5 L9.3 11 L5 13.5 L1 11 Z" fill="#fff" stroke="#1e1e1e" stroke-width="1.3" stroke-linejoin="round"/><path d="M1 5.5 L5 7.5 L9.3 5.5 M5 7.5 V13.5" fill="none" stroke="#1e1e1e" stroke-width="1.1"/><path d="M15 10 Q14.5 13.2 10.5 13.2 M12.3 11.3 L10.2 13.2 L12.3 15" fill="none" stroke="#3a96dd" stroke-width="1.3"/></svg>
<svg class="a" style="left:570px;top:152px;" width="14" height="12" viewBox="0 0 14 12"><rect x="0.6" y="0.6" width="12.8" height="10.8" fill="#fff" stroke="#1e1e1e" stroke-width="1.2"/><rect x="0" y="0" width="14" height="2.5" fill="#1e1e1e"/><path d="M1 6.3 H13" stroke="#777" stroke-width="1.3"/></svg>
<svg class="a" style="left:626px;top:152px;" width="14" height="12" viewBox="0 0 14 12"><path d="M0.6 11 V1 H5 L6.5 2.5 H11.5 V4" fill="none" stroke="#1e1e1e" stroke-width="1.1"/><path d="M0.6 11.4 L2.5 4.3 H13 V11.4 Z" fill="#1e1e1e"/></svg>
<svg class="a" style="left:721px;top:151px;" width="13" height="14" viewBox="0 0 13 14"><rect x="0.6" y="3" width="11.8" height="10.4" fill="#fff" stroke="#1e1e1e" stroke-width="1.2"/><rect x="0" y="3" width="13" height="3" fill="#3a96dd"/><path d="M2.5 0 V3 M5 0 V3 M7.8 0 V3 M10.5 0 V3" stroke="#1e1e1e" stroke-width="1"/><text x="6.5" y="12.3" font-family="Liberation Sans" font-size="6.5" font-weight="bold" text-anchor="middle" fill="#1e1e1e">12</text></svg>
<svg class="a" style="left:810px;top:151px;" width="14" height="14" viewBox="0 0 14 14"><circle cx="7" cy="7" r="7" fill="#1e1e1e"/><path d="M9.4 2.6 A4.6 4.6 0 1 0 9.4 11.4" fill="none" stroke="#fff" stroke-width="1.8"/><path d="M1.6 5.6 H8.4 M1.6 8.2 H8.4" stroke="#fff" stroke-width="1.2"/></svg>
<svg class="a" style="left:893px;top:152px;" width="11" height="12" viewBox="0 0 11 12"><rect x="0.6" y="0.6" width="9.8" height="10.8" fill="#fff" stroke="#3a96dd" stroke-width="1.2"/><path d="M2.5 3 L4 4.5 L7.5 1.8 M2.5 7 L4 8.5 L7.5 5.8" fill="none" stroke="#1e1e1e" stroke-width="1.1"/></svg>
<svg class="a" style="left:961px;top:152px;" width="16" height="15" viewBox="0 0 16 15"><rect x="0.6" y="0.6" width="13" height="11" rx="1" fill="#fff" stroke="#1e1e1e" stroke-width="1.2"/><rect x="0.5" y="0.5" width="13.2" height="2.3" fill="#1e1e1e"/><path d="M3.9 2.5 V11.5 M7.1 2.5 V11.5 M10.3 2.5 V11.5 M0.6 5.5 H13.6 M0.6 8.5 H13.6" stroke="#444" stroke-width="0.7"/><path d="M7 6 H15 V14.5 H7 Z" fill="#1e1e1e"/><rect x="8.5" y="6.8" width="5" height="2.7" fill="#fff"/><rect x="8.5" y="6.3" width="5" height="0.8" fill="#3a96dd"/><rect x="9" y="11.5" width="1.3" height="2" fill="#fff"/><rect x="11.5" y="11.5" width="1.3" height="2" fill="#fff"/></svg>
<svg class="a" style="left:1018px;top:151px;" width="15" height="15" viewBox="0 0 15 15"><circle cx="7.2" cy="7.2" r="6.6" fill="#fff" stroke="#1e1e1e" stroke-width="1.2"/><path d="M4.9 5.3 Q4.9 3 7.2 3 Q9.5 3 9.5 5 Q9.5 6.3 7.8 7.2 Q7.2 7.6 7.2 9" fill="none" stroke="#3a96dd" stroke-width="1.6"/><rect x="6.3" y="10" width="1.8" height="1.8" fill="#3a96dd"/></svg>
<svg class="a" style="left:18px;top:229px;" width="11" height="15" viewBox="0 0 11 15"><circle cx="5.3" cy="3.8" r="3.6" fill="#1e1e1e"/><path d="M0 14 Q0 8.3 5.3 8.3 Q10.6 8.3 10.6 14 Z" fill="#1e1e1e"/></svg>
<svg class="a" style="left:132px;top:230px;" width="15" height="14" viewBox="0 0 15 14"><circle cx="3.3" cy="2.6" r="2.1" fill="#1e1e1e"/><path d="M-0.0600000000000005 8.270000000000001 Q-0.0600000000000005 5.645 3.3 5.645 Q6.66 5.645 6.66 8.270000000000001 Z" fill="#1e1e1e"/><circle cx="11.2" cy="2.6" r="2.1" fill="#1e1e1e"/><path d="M7.839999999999999 8.270000000000001 Q7.839999999999999 5.645 11.2 5.645 Q14.559999999999999 5.645 14.559999999999999 8.270000000000001 Z" fill="#1e1e1e"/><circle cx="7.3" cy="7" r="2.6" fill="#3a96dd" stroke="#fff" stroke-width="0.8"/><path d="M3.3 13.5 Q3.3 9.7 7.3 9.7 Q11.3 9.7 11.3 13.5 Z" fill="#3a96dd" stroke="#fff" stroke-width="0.8"/></svg>
<svg class="a" style="left:234px;top:229px;" width="17" height="15" viewBox="0 0 17 15"><path d="M5.5 2 Q8 0.8 10.5 2 M2.5 8.5 Q3.5 11 5.5 11.5 M13.5 8.5 Q12.5 11 10.5 11.5" fill="none" stroke="#3a96dd" stroke-width="1.1"/><circle cx="3" cy="2" r="2.0" fill="#1e1e1e"/><path d="M-0.20000000000000018 7.4 Q-0.20000000000000018 4.9 3 4.9 Q6.2 4.9 6.2 7.4 Z" fill="#1e1e1e"/><circle cx="13" cy="2" r="2.0" fill="#1e1e1e"/><path d="M9.8 7.4 Q9.8 4.9 13 4.9 Q16.2 4.9 16.2 7.4 Z" fill="#1e1e1e"/><circle cx="8" cy="9" r="2.0" fill="#1e1e1e"/><path d="M4.8 14.4 Q4.8 11.9 8 11.9 Q11.2 11.9 11.2 14.4 Z" fill="#1e1e1e"/></svg>
<svg class="a" style="left:332px;top:231px;" width="15" height="14" viewBox="0 0 15 14"><path d="M0.8 6.5 L7 0.8 L13.2 6.5" fill="none" stroke="#3a96dd" stroke-width="1.6"/><path d="M2.5 6.8 L7 2.8 L11.5 6.8 V13 H2.5 Z" fill="#1e1e1e"/><rect x="5.5" y="8.5" width="3" height="4.5" fill="#fff"/></svg>
<svg class="a" style="left:541px;top:238px;" width="14" height="14" viewBox="0 0 14 14"><rect x="5" y="0" width="4" height="14" fill="#9bbf4e"/><rect x="0" y="5" width="14" height="4" fill="#9bbf4e"/></svg>
<svg class="a" style="left:582px;top:238px;" width="12" height="12" viewBox="0 0 12 12"><path d="M1.2 1.2 L10.8 10.8 M10.8 1.2 L1.2 10.8" stroke="#ff735a" stroke-width="2.6" stroke-linecap="round"/></svg>
<svg class="a" style="left:608px;top:238px;" width="14" height="13" viewBox="0 0 14 13"><rect x="3" y="0.5" width="8" height="5.5" fill="#fff" stroke="#3a96dd" stroke-width="1.1"/><path d="M4.8 2.5 H9.2 M4.8 4.2 H9.2" stroke="#3a96dd" stroke-width="0.9"/><rect x="0" y="6" width="14" height="7" rx="1.8" fill="#1e1e1e"/><rect x="2" y="9.5" width="10" height="2" fill="#fff"/><rect x="1.5" y="7.2" width="2" height="1" fill="#fff"/></svg>
<svg class="a" style="left:653px;top:237px;" width="12" height="14" viewBox="0 0 12 14"><path d="M6.5 4.25 A4 4 0 1 1 2.54 6.25" fill="none" stroke="#1e1e1e" stroke-width="2"/><path d="M2.6 3.9 L7.2 0.9 L7.2 6.9 Z" fill="#1e1e1e"/></svg>
<svg class="a" style="left:680px;top:237px;" width="15" height="16" viewBox="0 0 15 16"><path d="M0.6 0.6 H8.3 L11.5 3.8 V13.4 H0.6 Z" fill="#fff" stroke="#1e1e1e" stroke-width="1.1" stroke-linejoin="round"/><path d="M8.3 0.6 V3.8 H11.5" fill="none" stroke="#1e1e1e" stroke-width="1"/><rect x="4.7" y="6.6" width="9" height="8.5" fill="#fff" stroke="#1b7f3b" stroke-width="1.2"/><path d="M7.2 8.8 L11.2 12.9 M11.2 8.8 L7.2 12.9" stroke="#1b7f3b" stroke-width="1.3"/></svg>
<svg class="a" style="left:702px;top:237px;" width="14" height="14" viewBox="0 0 14 14"><circle cx="7" cy="7" r="6.3" fill="#fff" stroke="#1e1e1e" stroke-width="1.3"/><path d="M4.5 3 L7.2 7.3 L10 5.3" fill="none" stroke="#3a96dd" stroke-width="1.3" stroke-linejoin="round"/></svg>
<svg class="a" style="left:730px;top:238px;" width="14" height="14" viewBox="0 0 14 14"><path d="M0.2 1 H5 V2.2 H4 V4.6 Q9.5 5 10.8 9.2 V10.2 H0.2 Z" fill="#1e1e1e"/><circle cx="6.6" cy="3.6" r="0.75" fill="#1e1e1e"/><circle cx="8.8" cy="4.8" r="0.75" fill="#1e1e1e"/><circle cx="10.3" cy="6.5" r="0.75" fill="#1e1e1e"/><circle cx="11.2" cy="8.6" r="0.8" fill="#1e1e1e"/><rect x="0.2" y="11" width="12.8" height="3" fill="#3a96dd"/></svg>
<svg class="a" style="left:760px;top:239px;" width="14" height="12" viewBox="0 0 14 12"><path d="M0.6 11 V1 H5 L6.5 2.5 H11.5 V4" fill="none" stroke="#1e1e1e" stroke-width="1.1"/><path d="M0.6 11.4 L2.5 4.3 H13 V11.4 Z" fill="#1e1e1e"/></svg>
<svg class="a" style="left:804px;top:238px;" width="14" height="14" viewBox="0 0 14 14"><path d="M0 0.5 H14 V2 L8.5 7.5 V13.5 L5.5 13.5 V7.5 L0 2 Z" fill="#1e1e1e"/><rect x="1.5" y="1" width="11" height="0.8" fill="#fff" opacity="0.35"/></svg>
<svg class="a" style="left:849px;top:238px;" width="13" height="14" viewBox="0 0 13 14"><rect x="0.6" y="3" width="11.8" height="10.4" fill="#fff" stroke="#1e1e1e" stroke-width="1.2"/><rect x="0" y="3" width="13" height="3" fill="#3a96dd"/><path d="M2.5 0 V3 M5 0 V3 M7.8 0 V3 M10.5 0 V3" stroke="#1e1e1e" stroke-width="1"/><text x="6.5" y="12.3" font-family="Liberation Sans" font-size="6.5" font-weight="bold" text-anchor="middle" fill="#1e1e1e">12</text></svg>
<svg class="a" style="left:893px;top:237px;" width="16" height="15" viewBox="0 0 16 15"><rect x="0" y="2.8" width="5.5" height="5.5" rx="1" fill="#1e1e1e"/><rect x="0" y="9.3" width="5.5" height="5.5" rx="1" fill="#1e1e1e"/><rect x="7" y="9.3" width="5.5" height="5.5" rx="1" fill="#1e1e1e"/><rect x="8" y="0.8" width="5.5" height="5.5" rx="0.8" fill="#3a96dd" transform="rotate(20 10.8 3.5)"/></svg>
<svg class="a" style="left:942px;top:239px;" width="11" height="12" viewBox="0 0 11 12"><rect x="0.6" y="0.6" width="9.8" height="10.8" fill="#fff" stroke="#3a96dd" stroke-width="1.2"/><path d="M2.5 3 L4 4.5 L7.5 1.8 M2.5 7 L4 8.5 L7.5 5.8" fill="none" stroke="#1e1e1e" stroke-width="1.1"/></svg>
<svg class="a" style="left:988px;top:238px;" width="16" height="15" viewBox="0 0 16 15"><rect x="0.6" y="0.6" width="13" height="11" rx="1" fill="#fff" stroke="#1e1e1e" stroke-width="1.2"/><rect x="0.5" y="0.5" width="13.2" height="2.3" fill="#1e1e1e"/><path d="M3.9 2.5 V11.5 M7.1 2.5 V11.5 M10.3 2.5 V11.5 M0.6 5.5 H13.6 M0.6 8.5 H13.6" stroke="#444" stroke-width="0.7"/><path d="M7 6 H15 V14.5 H7 Z" fill="#1e1e1e"/><rect x="8.5" y="6.8" width="5" height="2.7" fill="#fff"/><rect x="8.5" y="6.3" width="5" height="0.8" fill="#3a96dd"/><rect x="9" y="11.5" width="1.3" height="2" fill="#fff"/><rect x="11.5" y="11.5" width="1.3" height="2" fill="#fff"/></svg>
</body></html>
